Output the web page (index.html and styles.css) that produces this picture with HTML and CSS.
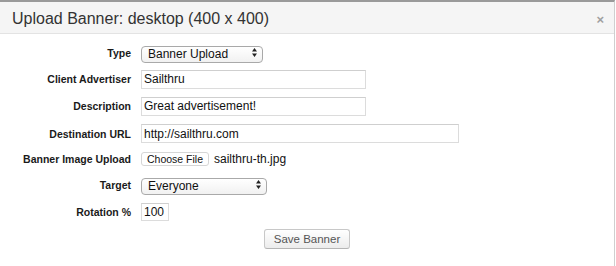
FILE: index.html
```html
<!DOCTYPE html>
<html lang="en">
<head>
  <meta charset="UTF-8">
  <title>Upload Banner</title>
  <link rel="stylesheet" href="styles.css">
</head>
<body>

  <!-- MODAL
   ================================================== -->
  <div class="modal">

    <div class="modal-header">
      <h3 class="modal-title">Upload Banner: desktop (400 x 400)</h3>
      <span class="modal-close">&times;</span>
    </div>

    <!-- FORM
     ================================================== -->
    <form class="banner-form">
      <label class="field-label">Type</label>
      <div class="field">
        <span class="select-box select-type">
          <select><option>Banner Upload</option></select>
          <svg class="select-arrows" width="5" height="9" viewBox="0 0 5 9"><path d="M2.5 0 L5 3.5 H0 Z M2.5 9 L5 5.5 H0 Z" fill="#222"/></svg>
        </span>
      </div>

      <label class="field-label">Client Advertiser</label>
      <div class="field"><input class="text-input input-medium" type="text" value="Sailthru"></div>

      <label class="field-label">Description</label>
      <div class="field"><input class="text-input input-medium" type="text" value="Great advertisement!"></div>

      <label class="field-label">Destination URL</label>
      <div class="field"><input class="text-input input-long" type="text" value="http://sailthru.com"></div>

      <label class="field-label">Banner Image Upload</label>
      <div class="field">
        <button class="file-btn" type="button">Choose File</button>
        <span class="file-name">sailthru-th.jpg</span>
      </div>

      <label class="field-label">Target</label>
      <div class="field">
        <span class="select-box select-target">
          <select><option>Everyone</option></select>
          <svg class="select-arrows" width="5" height="9" viewBox="0 0 5 9"><path d="M2.5 0 L5 3.5 H0 Z M2.5 9 L5 5.5 H0 Z" fill="#222"/></svg>
        </span>
      </div>

      <label class="field-label">Rotation %</label>
      <div class="field"><input class="text-input input-tiny" type="text" value="100"></div>

      <div class="form-actions">
        <button class="save-btn" type="button">Save Banner</button>
      </div>
    </form>

  </div>
</body>
</html>
```

FILE: styles.css
```css
* { box-sizing: border-box; }

body {
  margin: 0;
  background: #fff;
  font-family: 'Liberation Sans', Arial, sans-serif;
}

.modal {
  width: 615px;
  height: 266px;
  border-top: 2px solid #9a9a9a;
  border-right: 1px solid #cfcfcf;
  background: #fff;
}

  .modal-header {
    display: flex;
    align-items: center;
    justify-content: space-between;
    height: 32px;
    padding: 2px 10px 0 12px;
    background: #f5f5f5;
    border-bottom: 1px solid #e3e3e3;
  }
    .modal-title {
      margin: 0;
      font-size: 16px;
      font-weight: normal;
      color: #333;
    }
    .modal-close {
      margin-top: 2px;
      color: #a0a0a0;
      font-size: 13px;
      font-weight: bold;
      line-height: 1;
    }

  .banner-form {
    display: grid;
    grid-template-columns: 131px auto;
    grid-template-rows: 27px 26px 28px 27px 24px 27px 27px 28px;
    column-gap: 10px;
    align-items: center;
    padding-top: 5px;
  }
    .field-label {
      text-align: right;
      font-size: 10.5px;
      font-weight: bold;
      color: #1a1a1a;
    }
    .field {
      display: flex;
      align-items: center;
    }

    .text-input {
      height: 19px;
      padding: 0 1px 0 2px;
      border: 1px solid #dcdcdc;
      border-top-color: #cfcfcf;
      font-family: 'Liberation Sans', Arial, sans-serif;
      font-size: 12px;
      color: #111;
      outline: none;
    }
    .input-medium { width: 225px; }
    .input-long { width: 318px; }
    .input-tiny { width: 28px; height: 18px; }

    .select-box {
      position: relative;
      display: inline-block;
      height: 17px;
    }
      .select-box select {
        -webkit-appearance: none;
        appearance: none;
        width: 100%;
        height: 17px;
        padding: 0 0 0 6px;
        border: 1px solid #a9a9a9;
        border-radius: 4px;
        background: linear-gradient(#ffffff, #f1f1f1);
        font-family: 'Liberation Sans', Arial, sans-serif;
        font-size: 12px;
        color: #111;
      }
      .select-arrows {
        position: absolute;
        right: 6px;
        top: 4px;
      }
    .select-type { width: 122px; }
    .select-target { width: 126px; }

    .file-btn {
      height: 14px;
      padding: 0 5px;
      border: 1px solid #d6d6d6;
      border-radius: 3px;
      background: #fff;
      font-family: 'Liberation Sans', Arial, sans-serif;
      font-size: 10.5px;
      line-height: 12px;
      color: #111;
    }
    .file-name {
      margin-left: 5px;
      font-size: 12px;
      color: #111;
    }

    .form-actions {
      grid-column: 1 / 3;
      text-align: center;
    }
      .save-btn {
        height: 20px;
        padding: 0 9px;
        border: 1px solid #c8c8c8;
        border-bottom-color: #b5b5b5;
        border-radius: 3px;
        background: linear-gradient(#ffffff, #ececec);
        font-family: 'Liberation Sans', Arial, sans-serif;
        font-size: 11.5px;
        color: #555;
      }
```
